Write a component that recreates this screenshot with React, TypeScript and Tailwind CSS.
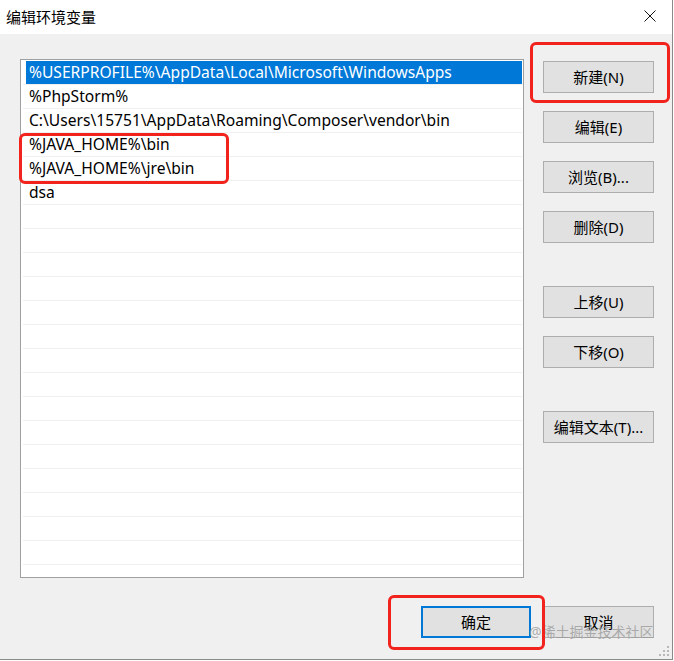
const paths = [
  "%USERPROFILE%\\AppData\\Local\\Microsoft\\WindowsApps",
  "%PhpStorm%",
  "C:\\Users\\15751\\AppData\\Roaming\\Composer\\vendor\\bin",
  "%JAVA_HOME%\\bin",
  "%JAVA_HOME%\\jre\\bin",
  "dsa",
];

const sideButtons = [
  { label: "新建(N)", gap: "mt-0" },
  { label: "编辑(E)", gap: "mt-[18px]" },
  { label: "浏览(B)...", gap: "mt-[18px]" },
  { label: "删除(D)", gap: "mt-[18px]" },
  { label: "上移(U)", gap: "mt-[43px]" },
  { label: "下移(O)", gap: "mt-[18px]" },
  { label: "编辑文本(T)...", gap: "mt-[43px]" },
];

const ROWS = 22;

function WinButton({ label, primary = false }: { label: string; primary?: boolean }) {
  return (
    <button
      className={`flex h-[32px] w-[111px] items-center justify-center bg-[#e1e1e1] text-[15px] text-black ${
        primary ? "border-2 border-[#0078d7]" : "border border-[#adadad]"
      }`}
    >
      {label}
    </button>
  );
}

export default function App() {
  const rows = Array.from({ length: ROWS }, (_, i) => paths[i] ?? "");

  return (
    <div
      className="relative h-[660px] w-[673px] overflow-hidden border-r border-b border-[#8a8a8a] bg-[#f0f0f0] text-black"
      style={{ fontFamily: '"Noto Sans", "Noto Sans CJK SC", sans-serif' }}
    >
      {/* title bar */}
      <div className="flex h-[34px] items-center justify-between bg-white pl-[6px] pr-[16px]">
        <span className="text-[15px] leading-none">编辑环境变量</span>
        <svg width="12" height="12" viewBox="0 0 12 12" className="mb-[2px]">
          <path d="M0.5 0.5 L11.5 11.5 M11.5 0.5 L0.5 11.5" stroke="#111" strokeWidth="1" />
        </svg>
      </div>

      <div className="flex pl-[20px] pt-[25px]">
        {/* path list */}
        <div className="h-[519px] w-[504px] overflow-hidden border border-[#a0a0a0] bg-white pl-[2px] pr-[1px] pt-[1px]">
          {rows.map((p, i) => (
            <div
              key={i}
              className="flex h-[24px] items-stretch border-b border-[#f0f0f0] text-[15.6px]"
            >
              {i === 0 ? (
                <div className="ml-[3px] flex flex-1 items-center bg-[#0078d7] pl-[3px] text-white">
                  {p}
                </div>
              ) : (
                <div className="flex flex-1 items-center pl-[6px]">{p}</div>
              )}
            </div>
          ))}
        </div>

        {/* side buttons */}
        <div className="ml-[19px] flex flex-col pt-[2px]">
          {sideButtons.map((b) => (
            <div key={b.label} className={b.gap}>
              <WinButton label={b.label} />
            </div>
          ))}
        </div>
      </div>

      {/* bottom buttons */}
      <div className="mt-[28px] flex gap-[12px] pl-[421px]">
        <button className="flex h-[32px] w-[110px] items-center justify-center border-2 border-[#0078d7] bg-[#e1e1e1] text-[15px]">
          确定
        </button>
        <WinButton label="取消" />
      </div>

      {/* watermark */}
      <div className="absolute left-[529px] top-[625px] text-[14px] leading-none text-[#9a9a9a]/80">
        @稀土掘金技术社区
      </div>

      {/* resize grip */}
      <svg className="absolute right-[2px] bottom-[2px]" width="11" height="11" viewBox="0 0 11 11">
        {[
          [8, 0],
          [4, 4],
          [8, 4],
          [0, 8],
          [4, 8],
          [8, 8],
        ].map(([x, y]) => (
          <rect key={`${x}-${y}`} x={x} y={y} width="2" height="2" fill="#b8b8b8" />
        ))}
      </svg>

      {/* red annotation boxes */}
      <div className="absolute left-[530px] top-[42px] h-[61px] w-[140px] rounded-[6px] border-[3px] border-[#f2231d]" />
      <div className="absolute left-[19px] top-[133px] h-[51px] w-[210px] rounded-[6px] border-[3px] border-[#f2231d]" />
      <div className="absolute left-[388px] top-[595px] h-[55px] w-[157px] rounded-[6px] border-[3px] border-[#f2231d]" />
    </div>
  );
}
